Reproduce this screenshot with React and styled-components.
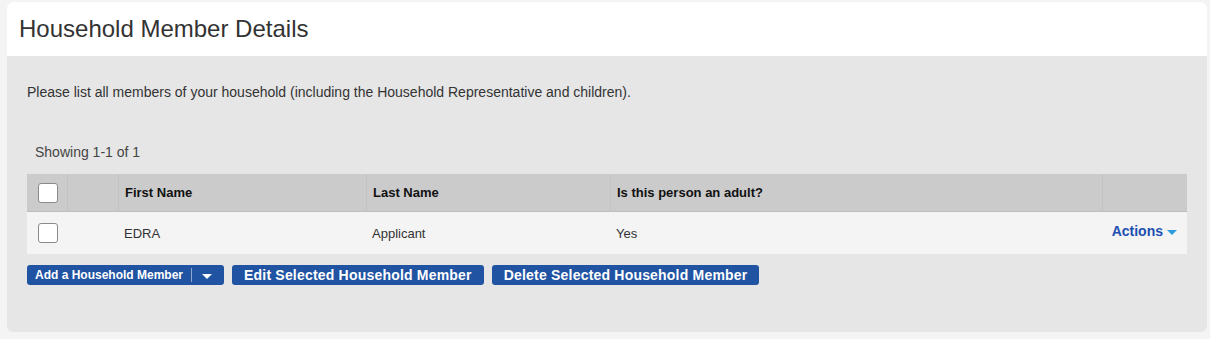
import React from "react";
import styled, { createGlobalStyle } from "styled-components";

const Global = createGlobalStyle`
  html, body { margin: 0; padding: 0; background: #f4f4f4; }
  body { font-family: Arial, "Liberation Sans", sans-serif; color: #333; }
`;

const Page = styled.div`
  padding: 2px 3px 8px 7px;
`;

const Card = styled.section`
  border-radius: 6px;
  overflow: hidden;
  background: #e6e6e6;
`;

const Header = styled.header`
  background: #fff;
  height: 54px;
  display: flex;
  align-items: center;
  padding: 0 12px;
`;

const Title = styled.h1`
  margin: 0;
  font-size: 24px;
  font-weight: normal;
  color: #333;
`;

const Body = styled.div`
  padding: 27px 20px 47px 20px;
`;

const Intro = styled.p`
  margin: 0 0 42px 0;
  font-size: 14px;
  line-height: 18px;
  color: #333;
`;

const Showing = styled.div`
  font-size: 14px;
  line-height: 18px;
  color: #444;
  padding-left: 8px;
  margin-bottom: 13px;
`;

const Table = styled.div`
  display: grid;
  grid-template-columns: 40px 51px 248px 244px 492px 1fr;
`;

const HeadCell = styled.div`
  background: #cbcbcb;
  height: 37px;
  display: flex;
  align-items: center;
  justify-content: ${(p) => (p.$center ? "center" : "flex-start")};
  padding-left: ${(p) => (p.$center ? "0" : "6px")};
  border-left: ${(p) => (p.$first ? "none" : "1px solid #c3c3c3")};
  border-bottom: 1px solid #bdbdbd;
  font-size: 13px;
  font-weight: bold;
  color: #111;
`;

const Cell = styled.div`
  background: #f4f4f4;
  height: 42px;
  display: flex;
  align-items: center;
  justify-content: ${(p) =>
    p.$center ? "center" : p.$right ? "flex-end" : "flex-start"};
  padding-left: ${(p) => (p.$center ? "0" : "6px")};
  padding-right: ${(p) => (p.$right ? "10px" : "0")};
  font-size: 13px;
  color: #333;
`;

const Check = styled.span`
  display: inline-block;
  width: 18px;
  height: 18px;
  background: #fff;
  border: 1px solid #8a8a8a;
  border-radius: 3px;
  margin-left: ${(p) => p.$offset || 0}px;
`;

const ActionsLink = styled.a`
  color: #1d4fb0;
  font-weight: bold;
  font-size: 14px;
  text-decoration: none;
  display: inline-flex;
  align-items: center;
  gap: 4px;
  margin-top: -4px;
`;

const Caret = styled.span`
  display: inline-block;
  width: 0;
  height: 0;
  border-left: 5px solid transparent;
  border-right: 5px solid transparent;
  border-top: 5px solid ${(p) => p.$color};
  margin-top: 2px;
`;

const ButtonRow = styled.div`
  display: flex;
  gap: 8px;
  margin-top: 11px;
  align-items: center;
`;

const Button = styled.button`
  background: #2153a3;
  color: #fff;
  border: none;
  border-radius: 3px;
  height: 20px;
  font-family: Arial, "Liberation Sans", sans-serif;
  font-weight: bold;
  font-size: ${(p) => (p.$small ? "12px" : "14px")};
  padding: ${(p) => (p.$split ? "0 0 0 8px" : "0 12px")};
  display: flex;
  align-items: center;
  cursor: pointer;
  letter-spacing: ${(p) => (p.$small ? "0" : "0.2px")};
`;

const SplitPart = styled.span`
  display: flex;
  align-items: center;
  border-left: 1px solid #8fa6cf;
  margin-left: 8px;
  padding: 0 12px 0 10px;
  height: 14px;
`;

export default function App() {
  return (
    <>
      <Global />
      <Page>
        <Card>
          <Header>
            <Title>Household Member Details</Title>
          </Header>
          <Body>
            <Intro>
              Please list all members of your household (including the Household
              Representative and children).
            </Intro>
            <Showing>Showing 1-1 of 1</Showing>
            <Table>
              <HeadCell $first $center>
                <Check $offset={1} />
              </HeadCell>
              <HeadCell />
              <HeadCell>First Name</HeadCell>
              <HeadCell>Last Name</HeadCell>
              <HeadCell>Is this person an adult?</HeadCell>
              <HeadCell />

              <Cell $center>
                <Check $offset={1} />
              </Cell>
              <Cell />
              <Cell>EDRA</Cell>
              <Cell>Applicant</Cell>
              <Cell>Yes</Cell>
              <Cell $right>
                <ActionsLink href="#">
                  Actions <Caret $color="#2d9be0" />
                </ActionsLink>
              </Cell>
            </Table>
            <ButtonRow>
              <Button $small $split>
                Add a Household Member
                <SplitPart>
                  <Caret $color="#fff" />
                </SplitPart>
              </Button>
              <Button>Edit Selected Household Member</Button>
              <Button>Delete Selected Household Member</Button>
            </ButtonRow>
          </Body>
        </Card>
      </Page>
    </>
  );
}
